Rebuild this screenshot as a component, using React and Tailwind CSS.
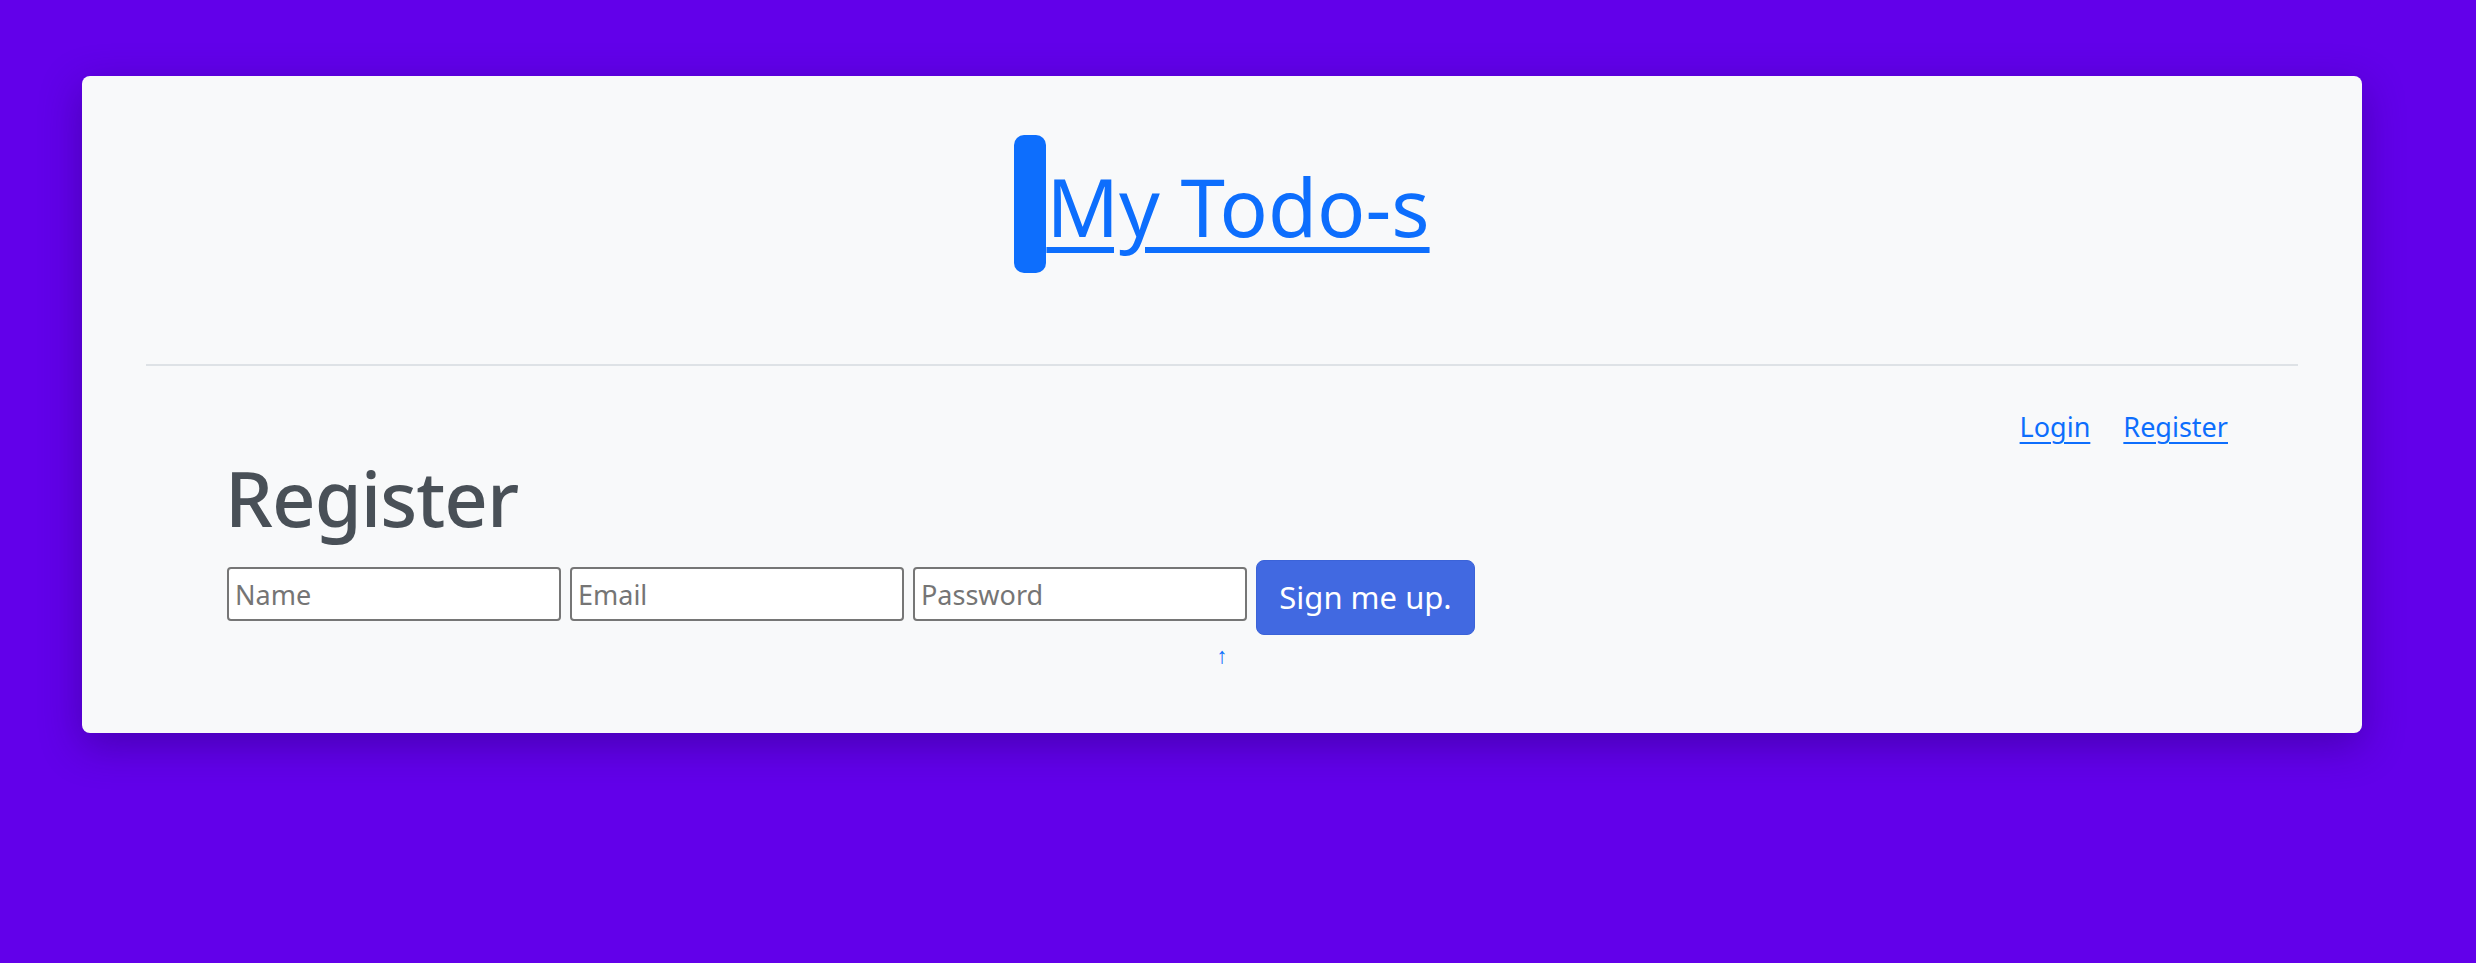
export default function App() {
  return (
    <div className="min-h-screen bg-[#6200ea] pt-[76px] font-['Noto_Sans',_'Open_Sans',_sans-serif]">
      <div className="ml-[82px] w-[2280px] h-[657px] rounded-lg bg-[#f8f9fa] px-16 shadow-[0_12px_40px_rgba(40,0,110,0.45)]">
        <header className="flex justify-center items-start pt-[59px] pb-[91px]">
          <a href="#" className="flex items-start text-[#0d6efd] underline decoration-[6px] underline-offset-[10px]">
            <span className="block w-[32px] h-[138px] rounded-[10px] bg-[#0d6efd]" />
            <span className="mt-[31px] text-[80px] leading-none">My Todo-s</span>
          </a>
        </header>
        <hr className="border-0 h-[2px] bg-[#dee2e6]" />
        <nav className="flex justify-end gap-[33px] mt-[40px] mr-[70px] text-[27px] leading-[42px]">
          <a href="#" className="text-[#0d6efd] underline underline-offset-[5px] decoration-[2px]">Login</a>
          <a href="#" className="text-[#0d6efd] underline underline-offset-[5px] decoration-[2px]">Register</a>
        </nav>
        <section className="pl-[81px]">
          <h1 className="mt-[4px] text-[76px] font-medium leading-[92px] text-[#495057] -ml-[2px] tracking-[-1px]">Register</h1>
          <form className="mt-[16px] flex items-start gap-[9px]" onSubmit={(e) => e.preventDefault()}>
            {["Name", "Email", "Password"].map((p) => (
              <input
                key={p}
                type={p === "Password" ? "password" : "text"}
                placeholder={p}
                className="mt-[7px] w-[334px] h-[54px] border-2 border-[#767676] rounded-[4px] bg-white px-[6px] text-[27px] placeholder:text-[#757575] outline-none"
              />
            ))}
            <button type="submit" className="w-[219px] h-[75px] rounded-lg bg-[#4169e1] text-white text-[31px] border border-[#3b63d8]">
              Sign me up.
            </button>
          </form>
        </section>
        <div className="mt-[8px] text-center">
          <a href="#" className="text-[#0d6efd] text-[22px] leading-none">↑</a>
        </div>
      </div>
    </div>
  );
}
